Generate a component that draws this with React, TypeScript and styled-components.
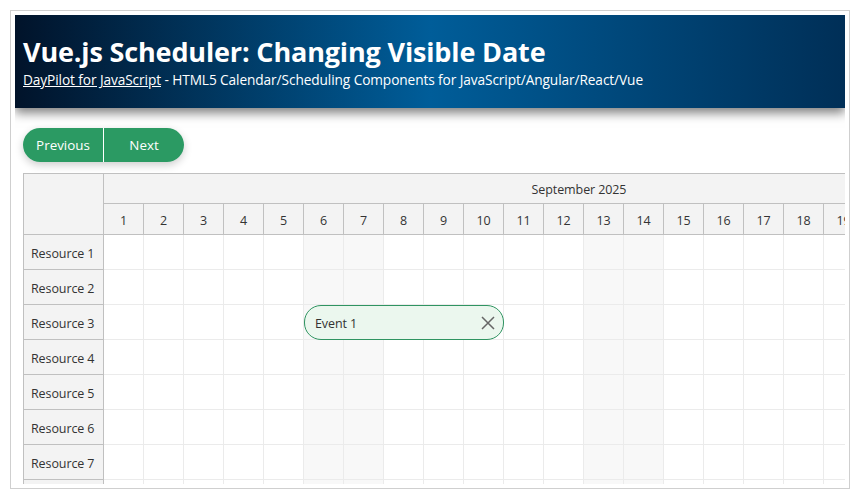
import React from "react";
import styled, { createGlobalStyle } from "styled-components";

const GlobalStyle = createGlobalStyle`
  body {
    margin: 10px;
    font-family: "Open Sans", "Noto Sans", sans-serif;
    background: #ffffff;
  }
`;

const DAYS = Array.from({ length: 30 }, (_, i) => i + 1);
const RESOURCES = Array.from({ length: 9 }, (_, i) => `Resource ${i + 1}`);
// September 2025 starts on a Monday, so the 6th/7th are the first weekend
const isWeekend = (day: number) => day % 7 === 6 || day % 7 === 0;

const Frame = styled.div`
  width: 840px;
  height: 479px;
  box-sizing: border-box;
  padding: 4px;
  border: 1px solid #cfcfcf;
  background: #ffffff;
  box-shadow: 1px 1px 7px rgba(0, 0, 0, 0.45);
`;

const Page = styled.div`
  height: 100%;
  overflow: hidden;
`;

const Header = styled.header`
  height: 93px;
  box-sizing: border-box;
  padding: 19px 8px 0;
  color: #ffffff;
  background: linear-gradient(to right, #01132a 0%, #005d99 50%, #002f57 100%);
  box-shadow: 0 5px 10px rgba(0, 0, 0, 0.5);
  position: relative;
`;

const Title = styled.h1`
  margin: 0;
  font-size: 27px;
  line-height: 36px;
  font-weight: 700;
  letter-spacing: -0.15px;
`;

const Subtitle = styled.div`
  font-size: 13.7px;
  line-height: 19px;
  letter-spacing: -0.1px;

  a {
    color: #ffffff;
    text-decoration: underline;
  }
`;

const Toolbar = styled.div`
  display: flex;
  padding: 20px 8px 11px;
`;

const ButtonGroup = styled.div`
  display: flex;
  border-radius: 17px;
  box-shadow: 0 3px 8px rgba(0, 0, 0, 0.2);
  overflow: hidden;
`;

const NavButton = styled.button<{ $first?: boolean }>`
  width: ${(p) => (p.$first ? "80px" : "81px")};
  height: 34px;
  border: none;
  border-left: ${(p) => (p.$first ? "none" : "1px solid #ffffff")};
  background: #2b9a63;
  color: #ffffff;
  font-family: inherit;
  font-size: 13.4px;
  padding: 0;
  cursor: pointer;
`;

const Scheduler = styled.div`
  margin-left: 8px;
  width: 1281px;
  border-top: 1px solid #c0c0c0;
  border-left: 1px solid #c0c0c0;
  font-size: 12.5px;
  letter-spacing: -0.1px;
  color: #333333;
`;

const HeaderRow = styled.div`
  display: flex;
`;

const Corner = styled.div`
  width: 79px;
  height: 60px;
  flex: none;
  background: #f3f3f3;
  border-right: 1px solid #c0c0c0;
  border-bottom: 1px solid #c0c0c0;
`;

const TimeHeader = styled.div`
  display: flex;
  flex-direction: column;
`;

const MonthCell = styled.div`
  width: 1200px;
  height: 30px;
  box-sizing: border-box;
  padding: 2px 250px 0 0;
  display: flex;
  align-items: center;
  justify-content: center;
  background: #f3f3f3;
  border-bottom: 1px solid #c0c0c0;
`;

const DayRow = styled.div`
  display: flex;
`;

const DayCell = styled.div`
  width: 40px;
  height: 31px;
  flex: none;
  box-sizing: border-box;
  padding-top: 2px;
  display: flex;
  align-items: center;
  justify-content: center;
  background: #f3f3f3;
  border-right: 1px solid #c0c0c0;
  border-bottom: 1px solid #c0c0c0;
`;

const Row = styled.div`
  display: flex;
  position: relative;
`;

const RowHeader = styled.div`
  width: 72px;
  height: 32px;
  flex: none;
  padding: 2px 0 0 7px;
  display: flex;
  align-items: center;
  background: #f3f3f3;
  border-right: 1px solid #c0c0c0;
  border-bottom: 1px solid #c0c0c0;
`;

const Cell = styled.div<{ $weekend: boolean }>`
  width: 39px;
  height: 34px;
  flex: none;
  background: ${(p) => (p.$weekend ? "#f8f8f8" : "#ffffff")};
  border-right: 1px solid #ebebeb;
  border-bottom: 1px solid #ebebeb;
`;

const Event = styled.div<{ $start: number; $days: number }>`
  position: absolute;
  top: 0;
  left: ${(p) => 80 + (p.$start - 1) * 40}px;
  width: ${(p) => p.$days * 40}px;
  height: 35px;
  box-sizing: border-box;
  display: flex;
  align-items: center;
  justify-content: space-between;
  padding: 1px 7px 0 10px;
  background: #ebf7ee;
  border: 1px solid #2f9461;
  border-radius: 17px;
  color: #333333;
`;

const DeleteButton = styled.span`
  display: flex;
  width: 16px;
  height: 16px;
  color: #666666;
`;

const DeleteIcon = () => (
	<DeleteButton>
		<svg width="16" height="16" viewBox="0 0 16 16">
			<path d="M2 2 L14 14 M14 2 L2 14" stroke="currentColor" strokeWidth="1.5" fill="none" />
		</svg>
	</DeleteButton>
);

const App = () => {
	return (
		<>
			<GlobalStyle />
			<Frame>
				<Page>
					<Header>
						<Title>Vue.js Scheduler: Changing Visible Date</Title>
						<Subtitle>
							<a href="#">DayPilot for JavaScript</a> - HTML5 Calendar/Scheduling Components for JavaScript/Angular/React/Vue
						</Subtitle>
					</Header>
					<Toolbar>
						<ButtonGroup>
							<NavButton $first>Previous</NavButton>
							<NavButton>Next</NavButton>
						</ButtonGroup>
					</Toolbar>
					<Scheduler>
						<HeaderRow>
							<Corner />
							<TimeHeader>
								<MonthCell>September 2025</MonthCell>
								<DayRow>
									{DAYS.map((d) => (
										<DayCell key={d}>{d}</DayCell>
									))}
								</DayRow>
							</TimeHeader>
						</HeaderRow>
						{RESOURCES.map((name, i) => (
							<Row key={name}>
								<RowHeader>{name}</RowHeader>
								{DAYS.map((d) => (
									<Cell key={d} $weekend={isWeekend(d)} />
								))}
								{i === 2 && (
									<Event $start={6} $days={5}>
										<span>Event 1</span>
										<DeleteIcon />
									</Event>
								)}
							</Row>
						))}
					</Scheduler>
				</Page>
			</Frame>
		</>
	);
};

export default App;
